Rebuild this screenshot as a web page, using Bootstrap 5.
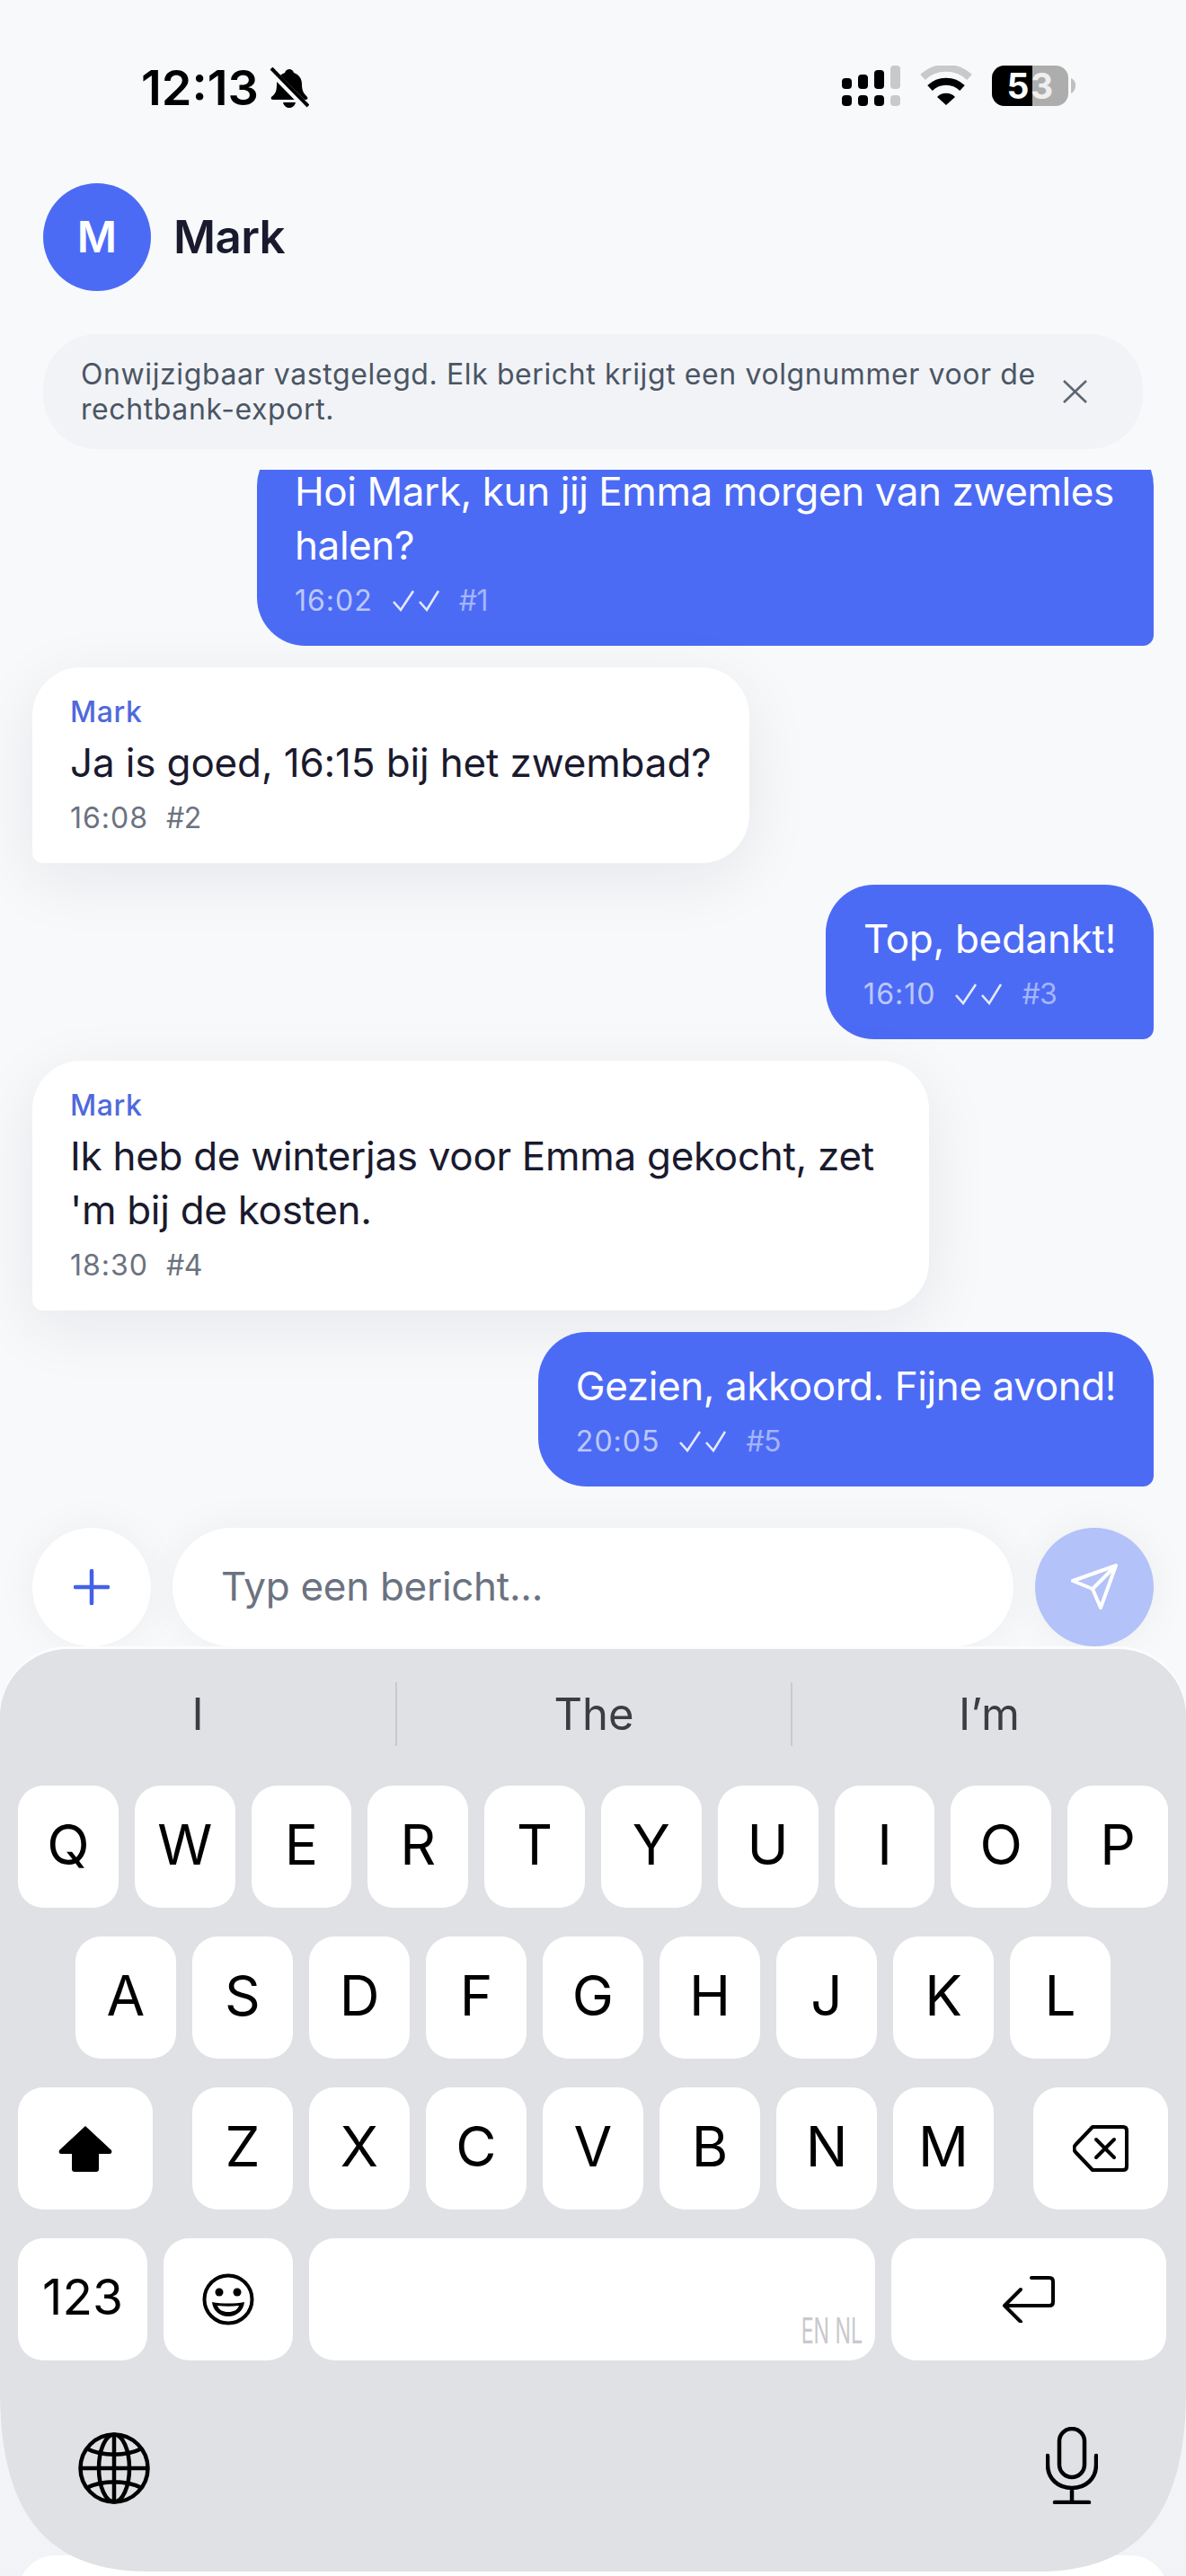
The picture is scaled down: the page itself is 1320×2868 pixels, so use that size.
<!DOCTYPE html>
<html lang="nl">
<head>
  <meta charset="UTF-8">
  <title>Mark</title>
  <link href="https://cdn.jsdelivr.net/npm/bootstrap@5.3.0/dist/css/bootstrap.min.css" rel="stylesheet">
  <style>
    body {
      margin: 0;
      background: #f8f9fa;
      font-family: Inter, "Liberation Sans", sans-serif;
    }
    .phone {
      position: relative;
      width: 1320px;
      height: 2868px;
      overflow: hidden;
      background: linear-gradient(to bottom, #f8f9fa 70%, #f2f3f7 100%);
    }
    .status-row { height: 204px; padding: 73px 122px 0 157px; gap: 12px; }
    .clock { font-size: 54px; font-weight: 600; line-height: 52px; color: #000; margin-top: -1px; }
    .bell { margin-top: 2px; }
    .status-icons { gap: 22px; }
    .chat-head { padding: 0 48px; gap: 25px; height: 120px; }
    .avatar {
      width: 120px; height: 120px;
      background: #4c6bf5; color: #fff;
      font-size: 48px; font-weight: 600;
    }
    .chat-name { font-size: 51px; font-weight: 600; letter-spacing: -.6px; color: #1a1a2e; }
    .notice {
      margin: 48px 48px 0;
      height: 128px;
      padding: 0 62px 0 42px;
      background: #f1f3f7;
      border-radius: 60px;
      gap: 24px;
      color: #4b5563;
      font-size: 32px;
      letter-spacing: .6px;
      line-height: 39px;
    }
    .msg-list { height: 1132px; margin-top: 23px; padding: 0 36px; gap: 24px; overflow: hidden; }
    .bubble {
      max-width: 998px;
      flex-shrink: 0;
      padding: 30px 42px;
      font-size: 44px;
      letter-spacing: -.3px;
      line-height: 60px;
    }
    .bubble-tight { letter-spacing: -.42px; }
    .bubble-loose { letter-spacing: -.15px; }
    .bubble-out { background: #4c6bf5; color: #fff; border-radius: 54px 54px 12px 54px; }
    .bubble-in {
      background: #fff; color: #1a1a2e;
      border-radius: 54px 54px 54px 12px;
      box-shadow: 0 18px 72px rgba(20, 30, 60, .08);
    }
    .sender { font-size: 32px; letter-spacing: .6px; line-height: 40px; margin-bottom: 6px; font-weight: 500; color: #4f69dc; }
    .meta { margin-top: 12px; font-size: 32px; letter-spacing: 1px; line-height: 40px; gap: 22px; color: #6b7280; }
    .bubble-in .meta { gap: 20px; }
    .bubble-out .meta { color: rgba(255, 255, 255, .65); }
    .seq { letter-spacing: -.6px; }
    .bubble-out .seq { color: rgba(255, 255, 255, .5); }
    .composer { margin-top: 46px; padding: 0 36px; gap: 24px; height: 132px; }
    .round-btn { width: 132px; height: 132px; flex-shrink: 0; box-shadow: 0 0 48px rgba(20, 30, 60, .05); }
    .msg-input {
      height: 132px;
      padding: 0 54px 3px;
      background: #fff;
      border-radius: 66px;
      color: #6b7280;
      font-size: 44px;
      letter-spacing: -.3px;
      box-shadow: 0 0 48px rgba(20, 30, 60, .05);
    }
    .send-btn { background: #b3c2f8; }
    .kbd {
      position: relative;
      z-index: 1;
      margin-top: 3px;
      height: 1027px;
      background: #dfe1e5;
      border-radius: 75px 75px 0 0;
      box-shadow: 0 -3px 0 #fdfdfe;
      clip-path: path("M0 -10H1320V826C1320 960 1270 1027 1155 1027H165C50 1027 0 960 0 826Z");
    }
    .suggest { height: 152px; padding-top: 37px; }
    .suggest-item {
      width: 440px; height: 71px;
      font-size: 49px; color: #3c3c43;
    }
    .suggest-item + .suggest-item { border-left: 2px solid #c8cacf; }
    .key-row { height: 136px; gap: 18px; margin-bottom: 32px; }
    .key-row.first { padding: 0 20px; }
    .key-row.second { padding: 0 84px; }
    .key {
      width: 112px;
      padding-bottom: 5px;
      background: #fff;
      border-radius: 28px;
      font-size: 62px;
      color: #000;
    }
    .key-num { font-size: 55px; }
    .w-shift { width: 150px; margin-right: 26px; padding-bottom: 0; }
    .w-back { width: 150px; margin-left: 26px; padding-bottom: 0; }
    .w-123 { width: 144px; }
    .w-emoji { width: 144px; padding-bottom: 0; }
    .w-space { width: 630px; position: relative; }
    .w-return { width: 306px; padding-bottom: 0; }
    .lang-tag {
      position: absolute; right: 14px; bottom: 13px;
      font-size: 40px; line-height: 40px; color: #c9c9cc;
      transform: scaleX(.58); transform-origin: right bottom;
    }
    .kbd-tools { padding: 0 98px 0 87px; margin-top: 74px; }
    .bottom-pill {
      position: absolute; left: 20px; right: 20px; bottom: -60px;
      height: 83px; background: #fff; border-radius: 70px;
    }
  </style>
</head>
<body>
<div class="phone">

  <div class="status-row d-flex">
    <span class="clock">12:13</span>
    <svg class="bell" width="44" height="46" viewBox="0 0 44 46"><path d="M22 2c2 0 4 1 5 4 6 2 9 7 9 13 0 7 2 10 6 14 1 2 0 3-2 3H4c-2 0-3-1-2-3 4-3 6-6 6-14 0-6 3-11 9-13 1-3 3-4 5-4zM15 39h14c-1 4-4 6-7 6s-6-2-7-6z" fill="#000"/><path d="M1 3l41 42" stroke="#f8f9fa" stroke-width="8"/><path d="M2 1l41 42" stroke="#000" stroke-width="4"/></svg>
    <div class="status-icons d-flex align-items-start ms-auto">
      <svg width="66" height="46" viewBox="0 0 66 46"><g fill="#000"><rect x="1" y="14" width="11" height="12" rx="4"/><rect x="1" y="33" width="11" height="12" rx="4"/><rect x="19" y="10" width="11" height="16" rx="4"/><rect x="19" y="33" width="11" height="12" rx="4"/><rect x="37" y="5" width="11" height="21" rx="4"/><rect x="37" y="33" width="11" height="12" rx="4"/></g><g fill="#c8c9cb"><rect x="55" y="0" width="11" height="26" rx="4"/><rect x="55" y="33" width="11" height="12" rx="4"/></g></svg>
      <svg width="58" height="44" viewBox="0 0 58 44"><path d="M3 13a38 38 0 0 1 52 0" fill="none" stroke="#c8c9cb" stroke-width="8"/><path d="M11 25a26 26 0 0 1 36 0" fill="none" stroke="#000" stroke-width="8"/><path d="M19 35a14 14 0 0 1 20 0l-10 9z" fill="#000"/></svg>
      <svg width="94" height="46" viewBox="0 0 94 46"><defs><clipPath id="battL"><rect width="45" height="46"/></clipPath></defs><rect width="85" height="45" rx="14" fill="#adadad"/><rect width="85" height="45" rx="14" fill="#000" clip-path="url(#battL)"/><text x="43" y="37" text-anchor="middle" font-family="Inter, sans-serif" font-size="39" font-weight="700" letter-spacing="1.5" fill="#fff">5<tspan fill="#efefef">3</tspan></text><path d="M88 14c4 2 5 5 5 8s-1 7-5 9z" fill="#c0c0c0"/></svg>
    </div>
  </div>

  <div class="chat-head d-flex align-items-center">
    <div class="avatar rounded-circle d-flex align-items-center justify-content-center">M</div>
    <div class="chat-name">Mark</div>
  </div>

  <div class="notice d-flex align-items-center">
    <div class="flex-grow-1">Onwijzigbaar vastgelegd. Elk bericht krijgt een volgnummer voor de rechtbank-export.</div>
    <svg width="27" height="26" viewBox="0 0 27 26" class="flex-shrink-0"><path d="M1 1l25 24M26 1L1 25" stroke="#5f6673" stroke-width="2.6"/></svg>
  </div>

  <div class="msg-list d-flex flex-column justify-content-end">
    <div class="bubble bubble-out bubble-tight align-self-end">
      Hoi Mark, kun jij Emma morgen van zwemles halen?
      <div class="meta d-flex align-items-center"><span>16:02</span><svg width="52" height="24" viewBox="0 0 52 24"><path d="M1 13l8 9L23 1M30 13l8 9L51 1" fill="none" stroke="#fff" stroke-opacity=".85" stroke-width="2.6"/></svg><span class="seq">#1</span></div>
    </div>
    <div class="bubble bubble-in bubble-loose align-self-start">
      <div class="sender">Mark</div>
      Ja is goed, 16:15 bij het zwembad?
      <div class="meta d-flex align-items-center"><span>16:08</span><span class="seq">#2</span></div>
    </div>
    <div class="bubble bubble-out align-self-end">
      Top, bedankt!
      <div class="meta d-flex align-items-center"><span>16:10</span><svg width="52" height="24" viewBox="0 0 52 24"><path d="M1 13l8 9L23 1M30 13l8 9L51 1" fill="none" stroke="#fff" stroke-opacity=".85" stroke-width="2.6"/></svg><span class="seq">#3</span></div>
    </div>
    <div class="bubble bubble-in align-self-start">
      <div class="sender">Mark</div>
      Ik heb de winterjas voor Emma gekocht, zet 'm bij de kosten.
      <div class="meta d-flex align-items-center"><span>18:30</span><span class="seq">#4</span></div>
    </div>
    <div class="bubble bubble-out bubble-tight align-self-end">
      Gezien, akkoord. Fijne avond!
      <div class="meta d-flex align-items-center"><span>20:05</span><svg width="52" height="24" viewBox="0 0 52 24"><path d="M1 13l8 9L23 1M30 13l8 9L51 1" fill="none" stroke="#fff" stroke-opacity=".85" stroke-width="2.6"/></svg><span class="seq">#5</span></div>
    </div>
  </div>

  <div class="composer d-flex align-items-center">
    <div class="round-btn rounded-circle bg-white d-flex align-items-center justify-content-center">
      <svg width="40" height="40" viewBox="0 0 40 40"><path d="M20 2v36M2 20h36" stroke="#4361e8" stroke-width="4.5" stroke-linecap="round"/></svg>
    </div>
    <div class="msg-input flex-grow-1 d-flex align-items-center">Typ een bericht...</div>
    <div class="round-btn send-btn rounded-circle d-flex align-items-center justify-content-center">
      <svg width="54" height="54" viewBox="0 0 54 54"><path d="M51 3L3 20l22 9 9 21z M51 3L25 29" fill="none" stroke="#fff" stroke-width="4" stroke-linejoin="round" stroke-linecap="round"/></svg>
    </div>
  </div>

  <div class="kbd">
    <div class="suggest d-flex">
      <div class="suggest-item d-flex align-items-center justify-content-center">I</div>
      <div class="suggest-item d-flex align-items-center justify-content-center">The</div>
      <div class="suggest-item d-flex align-items-center justify-content-center">I’m</div>
    </div>
    <div class="key-row first d-flex">
      <div class="key d-flex align-items-center justify-content-center">Q</div>
      <div class="key d-flex align-items-center justify-content-center">W</div>
      <div class="key d-flex align-items-center justify-content-center">E</div>
      <div class="key d-flex align-items-center justify-content-center">R</div>
      <div class="key d-flex align-items-center justify-content-center">T</div>
      <div class="key d-flex align-items-center justify-content-center">Y</div>
      <div class="key d-flex align-items-center justify-content-center">U</div>
      <div class="key d-flex align-items-center justify-content-center">I</div>
      <div class="key d-flex align-items-center justify-content-center">O</div>
      <div class="key d-flex align-items-center justify-content-center">P</div>
    </div>
    <div class="key-row second d-flex">
      <div class="key d-flex align-items-center justify-content-center">A</div>
      <div class="key d-flex align-items-center justify-content-center">S</div>
      <div class="key d-flex align-items-center justify-content-center">D</div>
      <div class="key d-flex align-items-center justify-content-center">F</div>
      <div class="key d-flex align-items-center justify-content-center">G</div>
      <div class="key d-flex align-items-center justify-content-center">H</div>
      <div class="key d-flex align-items-center justify-content-center">J</div>
      <div class="key d-flex align-items-center justify-content-center">K</div>
      <div class="key d-flex align-items-center justify-content-center">L</div>
    </div>
    <div class="key-row first d-flex">
      <div class="key w-shift d-flex align-items-center justify-content-center">
        <svg width="60" height="52" viewBox="0 0 60 52"><path d="M30 1L59 28c1 2 0 4-2 4H45v17c0 2-1 3-3 3H18c-2 0-3-1-3-3V32H3c-2 0-3-2-2-4z" fill="#000"/></svg>
      </div>
      <div class="key d-flex align-items-center justify-content-center">Z</div>
      <div class="key d-flex align-items-center justify-content-center">X</div>
      <div class="key d-flex align-items-center justify-content-center">C</div>
      <div class="key d-flex align-items-center justify-content-center">V</div>
      <div class="key d-flex align-items-center justify-content-center">B</div>
      <div class="key d-flex align-items-center justify-content-center">N</div>
      <div class="key d-flex align-items-center justify-content-center">M</div>
      <div class="key w-back d-flex align-items-center justify-content-center">
        <svg width="62" height="52" viewBox="0 0 62 52"><path d="M22 2h34c3 0 4 2 4 4v40c0 2-1 4-4 4H22L3 30c-2-2-2-6 0-8z" fill="none" stroke="#000" stroke-width="4" stroke-linejoin="round"/><path d="M26 16l20 20M46 16L26 36" stroke="#000" stroke-width="4" stroke-linecap="round"/></svg>
      </div>
    </div>
    <div class="key-row first d-flex">
      <div class="key key-num w-123 d-flex align-items-center justify-content-center">123</div>
      <div class="key w-emoji d-flex align-items-center justify-content-center">
        <svg width="58" height="58" viewBox="0 0 58 58"><circle cx="29" cy="29" r="26.5" fill="none" stroke="#000" stroke-width="4"/><circle cx="19" cy="21" r="4.5"/><circle cx="39" cy="21" r="4.5"/><path d="M11 32c10 2 26 2 36 0-1 10-9 16-18 16s-17-6-18-16z" fill="#000"/><path d="M17 36c8 1 16 1 24 0-2 5-6 7-12 7s-10-2-12-7z" fill="#fff"/></svg>
      </div>
      <div class="key w-space"><span class="lang-tag">EN NL</span></div>
      <div class="key w-return d-flex align-items-center justify-content-center">
        <svg width="60" height="52" viewBox="0 0 60 52"><path d="M33 2h20q4 0 4 4v23q0 4-4 4H3M21 15L3 33l18 18" fill="none" stroke="#000" stroke-width="4" stroke-linecap="round" stroke-linejoin="round"/></svg>
      </div>
    </div>
    <div class="kbd-tools d-flex justify-content-between align-items-end">
      <svg width="80" height="80" viewBox="0 0 80 80"><g fill="none" stroke="#000" stroke-width="4.5"><circle cx="40" cy="40" r="37.5"/><ellipse cx="40" cy="40" rx="17" ry="37.5"/><path d="M40 2v76M2 40h76M9 18c18 9 44 9 62 0M9 62c18-9 44-9 62 0"/></g></svg>
      <svg width="58" height="86" viewBox="0 0 58 86"><g fill="none" stroke="#000" stroke-width="4.5" stroke-linecap="round"><rect x="15" y="2" width="28" height="54" rx="14"/><path d="M2 32v10c0 16 12 26 27 26s27-10 27-26V32M29 68v16M10 84h38"/></g></svg>
    </div>
  </div>
  <div class="bottom-pill"></div>

</div>
<script src="https://cdn.jsdelivr.net/npm/bootstrap@5.3.0/dist/js/bootstrap.bundle.min.js"></script>
</body>
</html>
